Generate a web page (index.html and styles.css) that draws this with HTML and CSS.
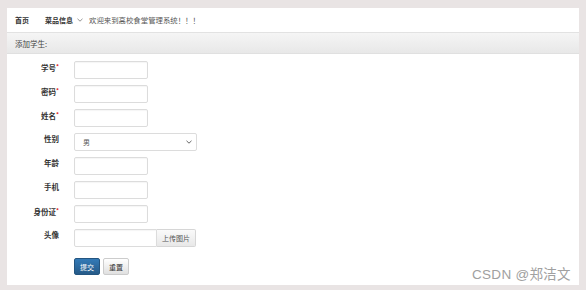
FILE: index.html
```html
<!DOCTYPE html>
<html lang="zh">
<head>
<meta charset="utf-8">
<title>添加学生</title>
<link rel="stylesheet" href="styles.css">
</head>
<body>
<div class="page">
  <div class="panel">
    <nav class="nav">
      <span class="nav-item bold">首页</span>
      <span class="nav-item bold dropdown">菜品信息
        <svg class="caret" width="6" height="4" viewBox="0 0 6 4"><path d="M0.5 0.8 L3 3.2 L5.5 0.8" fill="none" stroke="#888" stroke-width="0.9"/></svg>
      </span>
      <span class="nav-item welcome">欢迎来到高校食堂管理系统！！！</span>
    </nav>
    <div class="heading">添加学生:</div>
    <form class="form">
      <div class="row"><label class="lbl">学号<i class="req">*</i></label><input class="inp" type="text"></div>
      <div class="row"><label class="lbl">密码<i class="req">*</i></label><input class="inp" type="password"></div>
      <div class="row"><label class="lbl">姓名<i class="req">*</i></label><input class="inp" type="text"></div>
      <div class="row"><label class="lbl">性别</label>
        <div class="sel"><span>男</span>
          <svg class="sel-caret" width="6" height="4" viewBox="0 0 6 4"><path d="M0.5 0.8 L3 3.2 L5.5 0.8" fill="none" stroke="#555" stroke-width="0.9"/></svg>
        </div>
      </div>
      <div class="row"><label class="lbl">年龄</label><input class="inp" type="text"></div>
      <div class="row"><label class="lbl">手机</label><input class="inp" type="text"></div>
      <div class="row"><label class="lbl">身份证<i class="req">*</i></label><input class="inp" type="text"></div>
      <div class="row"><label class="lbl">头像</label>
        <div class="file"><input class="inp file-inp" type="text"><span class="file-btn">上传图片</span></div>
      </div>
      <div class="row actions">
        <span class="lbl"></span>
        <button type="button" class="btn primary">提交</button>
        <button type="button" class="btn default">重置</button>
      </div>
    </form>
  </div>
  <div class="watermark">CSDN @郑洁文</div>
</div>
</body>
</html>
```
FILE: styles.css
```css
* { box-sizing: border-box; }
html, body {
  margin: 0;
  padding: 0;
  width: 586px;
  height: 290px;
  overflow: hidden;
  background: #e9e4e4;
  font-family: "Noto Sans CJK SC", "Noto Sans", sans-serif;
  color: #333;
}
.page {
  position: relative;
  width: 586px;
  height: 290px;
  padding: 8px 7px 0 7px;
}
.panel {
  width: 572px;
  height: 277px;
  background: #fff;
}
.nav {
  height: 25px;
  display: flex;
  align-items: center;
  border-bottom: 1px solid #e2e2e2;
  padding-left: 8px;
  font-size: 7px;
}
.nav-item { line-height: 10px; }
.bold { font-weight: 700; color: #333; }
.dropdown { margin-left: 16px; display: flex; align-items: center; }
.caret { margin-left: 4px; }
.welcome { margin-left: 6px; color: #555; font-size: 7.4px; }
.heading {
  height: 21px;
  display: flex;
  align-items: center;
  padding-left: 8px;
  font-size: 7.5px;
  color: #444;
  background: linear-gradient(#f5f5f5, #e8e8e8);
  border-bottom: 1px solid #e0e0e0;
}
.form {
  padding-top: 7px;
  display: flex;
  flex-direction: column;
  gap: 6px;
}
.row {
  display: flex;
  align-items: flex-start;
  height: 18px;
}
.lbl {
  width: 52px;
  margin-right: 15px;
  text-align: right;
  font-size: 7.5px;
  font-weight: 700;
  line-height: 10px;
  padding-top: 1px;
  color: #333;
}
.req {
  color: #e02020;
  font-style: normal;
  font-size: 6px;
  vertical-align: 2px;
}
.inp {
  width: 74px;
  height: 18px;
  margin: 0;
  border: 1px solid #dcdcdc;
  border-radius: 2px;
  box-shadow: inset 0 1px 1px rgba(0,0,0,0.04);
  background: #fff;
  padding: 0;
}
.sel {
  width: 123px;
  height: 18px;
  border: 1px solid #dcdcdc;
  border-radius: 2px;
  display: flex;
  align-items: center;
  justify-content: space-between;
  padding: 0 4px 0 8px;
  font-size: 7px;
  color: #555;
}
.file { display: flex; }
.file-inp {
  width: 83px;
  border-radius: 2px 0 0 2px;
}
.file-btn {
  width: 39px;
  height: 18px;
  border: 1px solid #d6d6d6;
  border-left: none;
  border-radius: 0 2px 2px 0;
  background: linear-gradient(#fafafa, #e8e8e8);
  font-size: 7px;
  color: #555;
  display: flex;
  align-items: center;
  justify-content: center;
}
.actions { margin-top: 5px; height: 17px; }
.btn {
  height: 17px;
  padding: 0;
  font-family: inherit;
  font-size: 7px;
  border-radius: 2px;
  margin: 0;
  display: flex;
  align-items: center;
  justify-content: center;
}
.primary {
  width: 26px;
  color: #fff;
  border: 1px solid #245580;
  background: linear-gradient(#337ab7, #265a88);
}
.default {
  width: 26px;
  margin-left: 3px;
  color: #333;
  border: 1px solid #ccc;
  background: linear-gradient(#fff, #e0e0e0);
}
.watermark {
  position: absolute;
  left: 472px;
  top: 263px;
  font-family: "Liberation Sans", "Noto Sans CJK SC", sans-serif;
  font-size: 13.5px;
  color: #a0a0a0;
  letter-spacing: 0.3px;
}
```
